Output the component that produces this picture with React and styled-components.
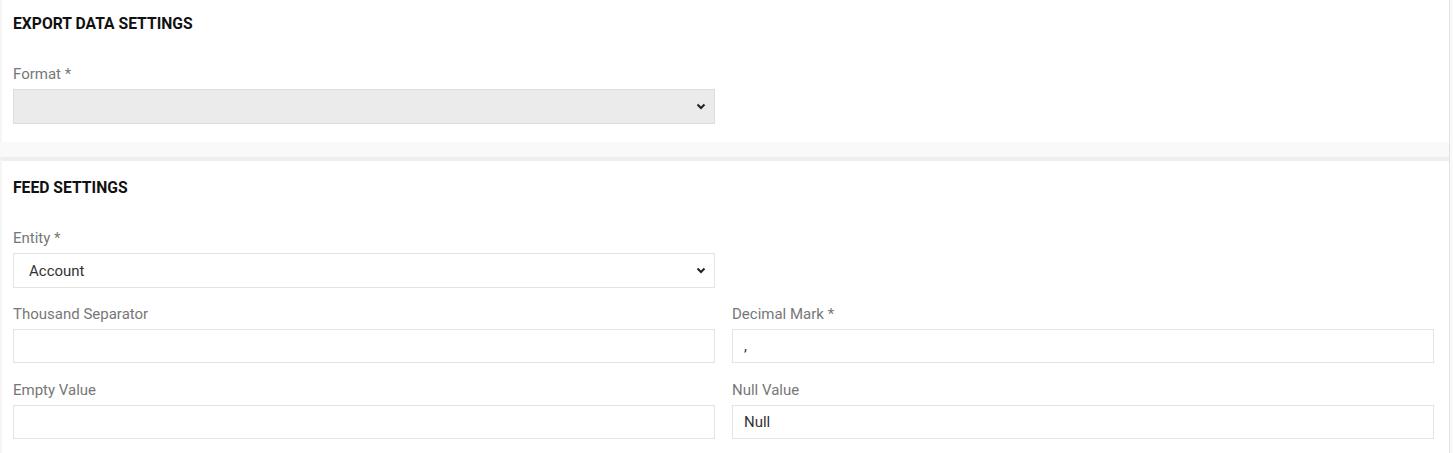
import React from 'react'
import styled, { createGlobalStyle } from 'styled-components'

const GlobalStyle = createGlobalStyle`
    body {
        margin: 0;
        background: #f9f9f9;
        font-family: Roboto, "Liberation Sans", Arial, sans-serif;
    }
    * { box-sizing: border-box; }
`

const Page = styled.div`
    width: 1450px;
    min-height: 453px;
    background: #f9f9f9;
    border-right: 1px solid #e2e2e2;
    display: flex;
    flex-direction: column;
    gap: 15px;
`

const Panel = styled.section`
    background: #fff;
    border-left: 2px solid #f5f5f5;
    border-top: ${p => (p.$divided ? '4px solid #eeeeee' : 'none')};
    padding: ${p => (p.$divided ? '16px' : '13px')} 15px 18px 11px;
`

const Heading = styled.h3`
    margin: 0 0 30px;
    font-size: 15.7px;
    line-height: 21px;
    font-weight: 700;
    color: #111;
    text-transform: uppercase;
`

const Grid = styled.div`
    display: grid;
    grid-template-columns: 1fr 1fr;
    column-gap: 17px;
    row-gap: 16px;
`

const Field = styled.div`
    display: flex;
    flex-direction: column;
    grid-column: ${p => (p.$col ? p.$col : 'auto')};
`

const Label = styled.label`
    font-size: 15px;
    line-height: 21px;
    color: #777;
    margin-bottom: 4px;
`

const SelectWrap = styled.div`
    position: relative;
    height: 35px;
`

const Select = styled.select`
    appearance: none;
    width: 100%;
    height: 35px;
    border: 1px solid ${p => (p.$disabled ? '#dcdcdc' : '#e3e3e3')};
    background: ${p => (p.$disabled ? '#ebebeb' : '#fff')};
    padding: 0 30px 0 15px;
    font-family: inherit;
    font-size: 15px;
    color: #333;
    outline: none;
`

const Chevron = styled.svg`
    position: absolute;
    right: 9px;
    top: 14px;
    pointer-events: none;
`

const Input = styled.input`
    width: 100%;
    height: 34px;
    margin-bottom: 1px;
    border: 1px solid #e3e3e3;
    background: #fff;
    padding: 0 11px;
    font-family: inherit;
    font-size: 15px;
    color: #333;
    outline: none;
`

function Dropdown({ value, options, disabled }) {
    return (
        <SelectWrap>
            <Select $disabled={disabled} defaultValue={value}>
                {options.map(o => <option key={o} value={o}>{o}</option>)}
            </Select>
            <Chevron width="10" height="7" viewBox="0 0 10 7">
                <path d="M1.5 1.5 L5 5 L8.5 1.5" fill="none" stroke="#222" strokeWidth="2" />
            </Chevron>
        </SelectWrap>
    )
}

export default function App() {
    return (
        <>
            <GlobalStyle />
            <Page>
                <Panel>
                    <Heading>Export Data Settings</Heading>
                    <Grid>
                        <Field $col="1">
                            <Label>Format *</Label>
                            <Dropdown value="" options={['']} disabled />
                        </Field>
                    </Grid>
                </Panel>
                <Panel $divided>
                    <Heading>Feed Settings</Heading>
                    <Grid>
                        <Field $col="1">
                            <Label>Entity *</Label>
                            <Dropdown value="Account" options={['Account', 'Contact', 'Product']} />
                        </Field>
                        <Field $col="1">
                            <Label>Thousand Separator</Label>
                            <Input defaultValue="" />
                        </Field>
                        <Field>
                            <Label>Decimal Mark *</Label>
                            <Input defaultValue="," />
                        </Field>
                        <Field>
                            <Label>Empty Value</Label>
                            <Input defaultValue="" />
                        </Field>
                        <Field>
                            <Label>Null Value</Label>
                            <Input defaultValue="Null" />
                        </Field>
                    </Grid>
                </Panel>
            </Page>
        </>
    )
}
